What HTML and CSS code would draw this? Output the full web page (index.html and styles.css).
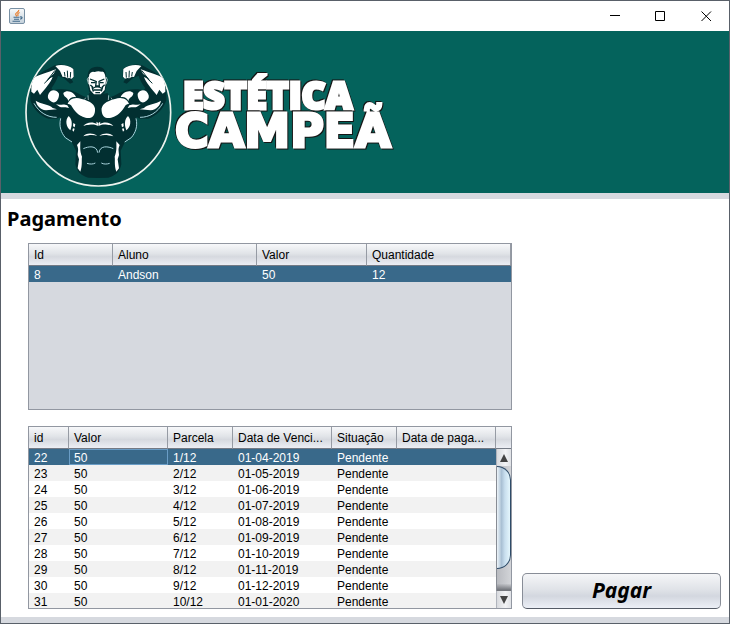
FILE: index.html
```html
<!DOCTYPE html>
<html lang="pt-BR">
<head>
<meta charset="utf-8">
<meta name="viewport" content="width=device-width, initial-scale=1">
<title>Pagamento</title>
<link rel="stylesheet" href="styles.css">
</head>
<body>
<div class="window">
  <header class="titlebar">
    <svg class="app-icon" width="16" height="16" viewBox="0 0 16 16" aria-hidden="true">
      <defs><linearGradient id="tile" x1="0" y1="0" x2="0" y2="1"><stop offset="0" stop-color="#f8fafb"/><stop offset="1" stop-color="#c3d0da"/></linearGradient></defs>
      <rect x=".5" y=".5" width="15" height="15" rx="1.5" fill="url(#tile)" stroke="#7890a4"/>
      <path d="M9.8 1.8C10.5 4 6.2 4.600 6.700 6.400C6.900 7.300 7.600 7.500 7.600 8.400M10.600 4.400C8.700 5.200 8.500 5.900 9 6.800C9.200 7.300 9 7.700 8.600 8.200" fill="none" stroke="#e87722" stroke-width="1.100"/>
      <path d="M4.500 9.200H10.500M5 11.200H10M3.500 13.300H11M11 9C14 8.300 13.500 10.700 11.200 11.100" fill="none" stroke="#42698a" stroke-width="1.100"/>
    </svg>
    <div class="window-buttons">
      <button type="button" aria-label="Minimizar"><svg width="11" height="11" viewBox="0 0 11 11"><path d="M1 4.500H11"/></svg></button>
      <button type="button" aria-label="Maximizar"><svg width="11" height="11" viewBox="0 0 11 11"><path d="M.5 .5H9.500V9.500H.5Z"/></svg></button>
      <button type="button" aria-label="Fechar"><svg width="11" height="11" viewBox="0 0 11 11"><path d="M.5 .5L10 10M10 .5L.5 10"/></svg></button>
    </div>
  </header>

  <div class="banner">
    <svg class="emblem" width="160" height="155" viewBox="0 0 480 465" aria-hidden="true">
      <ellipse cx="235" cy="232" rx="217" ry="221" fill="#054c49" stroke="#eef3ee" stroke-width="5"/>
      <defs>
        <g id="half">
          <path fill="#022f31" d="M236 180L207 174L205 188C190 186 176 174 150 165C130 162 112 162 100 166L94 160C104 146 112 132 114 122L132 130L150 146L160 142L154 132L162 126L161 101L145 92L120 88L104 91L72 108L42 128L31 165L31 196C40 223 60 243 85 251L110 251L121 246C118 265 120 282 130 300L155 321L168 347L166 388C170 408 181 422 205 428L236 429Z"/>
          <g fill="#fff">
            <path d="M42 128C57 119 84 112 108 103L101 116L82 132L98 126C93 142 74 163 60 180L52 164L42 176L34 170C33 155 36 139 42 128Z"/>
            <path d="M106 93C122 87 147 91 160 102L161 125L155 131L148 129L142 130L134 125L128 126L120 108Z"/>
            <path d="M84 181C88 165 106 159 117 176C118 192 107 207 96 201C86 196 82 190 84 181Z"/>
            <path d="M130 174C142 162 164 173 168 187C160 184 149 188 145 198C142 185 131 188 130 174Z"/>
            <path d="M143 207C146 194 164 183 185 192C211 198 228 210 225 228C223 252 204 252 188 245C171 237 164 227 156 215C153 209 148 206 143 207Z"/>
            <path d="M47 197C60 207 89 207 98 219L111 223L78 226C60 224 50 211 47 197Z"/>
            <path d="M108 208C122 212 128 205 142 211L147 219C135 214 126 219 119 215Z"/>
            <path d="M146 243C153 249 160 263 151 286C139 278 134 255 146 243Z"/>
            <path d="M160 264L166 268L164 277L159 274ZM159 280L164 281L161 290L157 286Z"/>
            <path d="M181 319L171 330C177 344 173 350 173 360L177 373L173 400L181 410C188 390 184 373 186 365C179 347 181 335 181 319Z"/>
            <path d="M190 273C199 261 217 259 232 267L233 272C219 265 209 270 200 270ZM229 260L235 264L235 273L231 270Z"/>
            <path d="M190 304C195 296 216 291 232 303C218 298 205 301 190 304Z"/>
          </g>
          <g fill="none" stroke="#a9d4dd" stroke-width="3">
            <path d="M190 341C205 334 230 330 233 353M201 385C210 388 219 388 226 384M122 250C116 275 124 293 136 308L156 321M42 205C58 233 82 247 110 247"/>
          </g>
          <path d="M133 111L135 124M142 107L143 128M152 111L151 128M73 145L98 121M81 137L105 106M185 247L203 263" fill="none" stroke="#022f31" stroke-width="3"/>
          <path d="M204 181L205 195M197 188L194 193" stroke="#d9edf0" stroke-width="2"/>
        </g>
      </defs>
      <use href="#half"/>
      <use href="#half" transform="translate(470 0) scale(-1 1)"/>
      <path d="M203 132C201 105 213 95 232 95C252 95 261 107 258 134L262 136L259 153L255 171L243 183H221L208 171L204 154Z" fill="#022f31"/>
      <path d="M208 118Q213 107 224 111Q234 107 244 110Q252 108 255 119L258 136L254 165L242 178H222L211 166L205 137Z" fill="#fff"/>
      <path d="M210 132L228 139M253 132L237 139M213 143H226M240 143H251M229 138L227 153H238L237 138M218 160Q231 151 246 160M221 165H244M226 173H240M211 150L219 157M254 149L246 157M216 156L220 170M248 156L244 169" fill="none" stroke="#022f31" stroke-width="4"/>
      <path d="M207 125L202 133L206 148M258 126L262 134L258 148" fill="none" stroke="#fff" stroke-width="2"/>
    </svg>
    <svg class="wordmark" width="225" height="95" viewBox="0 0 225 95" role="img" aria-label="Estética Campeã">
      <text class="word word-top" x="11" y="42">ESTÉTICA</text>
      <text class="word word-bottom" x="3" y="80">CAMPEÃ</text>
    </svg>
  </div>

  <main class="content">
    <h1>Pagamento</h1>
    <div class="layout">
      <div class="tables">
        <section class="pane pane-student" aria-label="Aluno">
          <table>
            <colgroup><col class="w84"><col class="w144"><col class="w110"><col class="w144"></colgroup>
            <thead><tr><th>Id</th><th>Aluno</th><th>Valor</th><th>Quantidade</th></tr></thead>
            <tbody><tr class="selected"><td>8</td><td>Andson</td><td>50</td><td>12</td></tr></tbody>
          </table>
        </section>
        <section class="pane pane-installments" aria-label="Parcelas">
          <table>
            <colgroup><col class="w40"><col class="w99"><col class="w65"><col class="w99"><col class="w65"><col class="w99"></colgroup>
            <thead><tr><th>id</th><th>Valor</th><th>Parcela</th><th>Data de Venci...</th><th>Situação</th><th>Data de paga...</th></tr></thead>
            <tbody>
              <tr class="selected"><td>22</td><td class="focused">50</td><td>1/12</td><td>01-04-2019</td><td>Pendente</td><td></td></tr>
              <tr><td>23</td><td>50</td><td>2/12</td><td>01-05-2019</td><td>Pendente</td><td></td></tr>
              <tr><td>24</td><td>50</td><td>3/12</td><td>01-06-2019</td><td>Pendente</td><td></td></tr>
              <tr><td>25</td><td>50</td><td>4/12</td><td>01-07-2019</td><td>Pendente</td><td></td></tr>
              <tr><td>26</td><td>50</td><td>5/12</td><td>01-08-2019</td><td>Pendente</td><td></td></tr>
              <tr><td>27</td><td>50</td><td>6/12</td><td>01-09-2019</td><td>Pendente</td><td></td></tr>
              <tr><td>28</td><td>50</td><td>7/12</td><td>01-10-2019</td><td>Pendente</td><td></td></tr>
              <tr><td>29</td><td>50</td><td>8/12</td><td>01-11-2019</td><td>Pendente</td><td></td></tr>
              <tr><td>30</td><td>50</td><td>9/12</td><td>01-12-2019</td><td>Pendente</td><td></td></tr>
              <tr><td>31</td><td>50</td><td>10/12</td><td>01-01-2020</td><td>Pendente</td><td></td></tr>
            </tbody>
          </table>
          <div class="scroll">
            <div class="corner"></div>
            <button type="button" class="arrow" aria-label="Rolar para cima"><svg width="8" height="8" viewBox="0 0 8 8"><path d="M4 0L8 8H0Z"/></svg></button>
            <div class="track"><div class="thumb"></div></div>
            <button type="button" class="arrow arrow-down" aria-label="Rolar para baixo"><svg width="8" height="8" viewBox="0 0 8 8"><path d="M0 0H8L4 8Z"/></svg></button>
          </div>
        </section>
      </div>
      <button type="button" class="pay">Pagar</button>
    </div>
  </main>
</div>
</body>
</html>
```
FILE: styles.css
```css
* { box-sizing: border-box; }

body {
  margin: 0;
  background: #d6d9df;
  color: #000;
  font-family: "Liberation Sans", Arial, sans-serif;
  font-size: 12px;
}

button { font: inherit; color: inherit; margin: 0; padding: 0; }

.window {
  display: flex;
  flex-direction: column;
  min-height: 100vh;
  padding-bottom: 6px;
  border: 1px solid #596069;
  background: #d6d9df;
}

.titlebar {
  display: flex;
  align-items: center;
  justify-content: space-between;
  height: 30px;
  padding-left: 8px;
  background: #fff;
}

.window-buttons { display: flex; }
.window-buttons button {
  display: grid;
  place-items: center;
  width: 46px;
  height: 28px;
  border: 0;
  background: none;
}
.window-buttons path { fill: none; stroke: #000; stroke-width: 1; }

.banner {
  display: flex;
  align-items: flex-start;
  height: 162px;
  padding: 4px 19px;
  background: #04635c;
}
.emblem { flex: none; }
.wordmark { flex: none; margin: 32px 0 0 -8px; overflow: visible; }
.word {
  fill: #fff;
  stroke: #fff;
  stroke-width: 3px;
  stroke-linejoin: miter;
  filter: drop-shadow(1px 1px 0 #161616) drop-shadow(-1px -1px 0 #161616);
}
.word-top {
  font-family: "Open Sans", "Noto Sans", sans-serif;
  font-size: 37px;
  font-weight: 800;
}
.word-bottom {
  font-family: "DejaVu Sans", sans-serif;
  font-size: 46px;
  font-weight: 700;
}

.content {
  flex: 1;
  margin-top: 6px;
  padding: 6px 8px 8px 6px;
  background: #fff;
}

h1 {
  margin: 0 0 11px;
  font-family: "Noto Sans", "Open Sans", sans-serif;
  font-size: 20px;
  line-height: 27px;
  font-weight: 700;
}

.layout {
  display: grid;
  grid-template-columns: minmax(0, 484fr) minmax(0, 199fr);
  gap: 10px;
  align-items: end;
  padding-left: 21px;
}

.tables { display: grid; gap: 16px; }

.pane {
  border: 1px solid #9297a1;
  background: #d6d9df;
}
.pane-student { min-height: 167px; }
.pane-installments {
  display: grid;
  grid-template-columns: minmax(0, 1fr) 15px;
}

table {
  width: 100%;
  table-layout: fixed;
  border-collapse: separate;
  border-spacing: 0;
}
.w40 { width: 40px; }
.w65 { width: 65px; }
.w84 { width: 84px; }
.w99 { width: 99px; }
.w110 { width: 110px; }
.w144 { width: 144px; }

th, .corner {
  height: 22px;
  border-right: 1px solid #969ba4;
  border-bottom: 1px solid #747a85;
  background: linear-gradient(#f7f8fa, #e1e4e8 45%, #d6d9df 60%, #eceef4);
}
th, td {
  padding: 0 5px;
  font-weight: 400;
  text-align: left;
  white-space: nowrap;
  overflow: hidden;
}
td { height: 16px; padding-top: 2px; line-height: 14px; background: #fff; }
.pane-installments tr:last-child td { height: 15px; padding-top: 3px; line-height: 12px; }
tr:nth-child(even) td { background: #f2f2f2; }
.pane tr.selected td { background: #39698a; color: #fff; }
td.focused { box-shadow: inset 0 0 0 1px #6a9dc6; }

.scroll { display: flex; flex-direction: column; }
.corner { border-right: 0; }
.arrow {
  display: grid;
  place-items: center;
  height: 17px;
  border: 0;
  border-left: 1px solid #b0b4bc;
  background: linear-gradient(90deg, #d8dade, #f2f3f5 60%, #dfe1e5);
}
.arrow path { fill: #444; }
.track {
  flex: 1;
  display: flex;
  padding-bottom: 22px;
  border-left: 1px solid #888c94;
  background: linear-gradient(transparent 94%, #75787e 99%), linear-gradient(90deg, #b9bbc0, #d2d4d8);
}
.thumb {
  flex: 1;
  border: 1px solid #2e4b68;
  border-left: 0;
  border-radius: 0 14px 14px 0;
  background: linear-gradient(90deg, #edf4f9, #a9c0d4 35%, #c8deee 60%, #e4f6fd);
}

.pay {
  height: 36px;
  padding-bottom: 2px;
  border: 1px solid #888d97;
  border-bottom-color: #555b66;
  border-radius: 5px;
  background: linear-gradient(#f5f6f8, #e0e3e8 45%, #d3d7df 65%, #eceff6);
  font-family: "Noto Sans", "Open Sans", sans-serif;
  font-size: 21px;
  line-height: 27px;
  font-weight: 700;
  font-style: italic;
}
```
